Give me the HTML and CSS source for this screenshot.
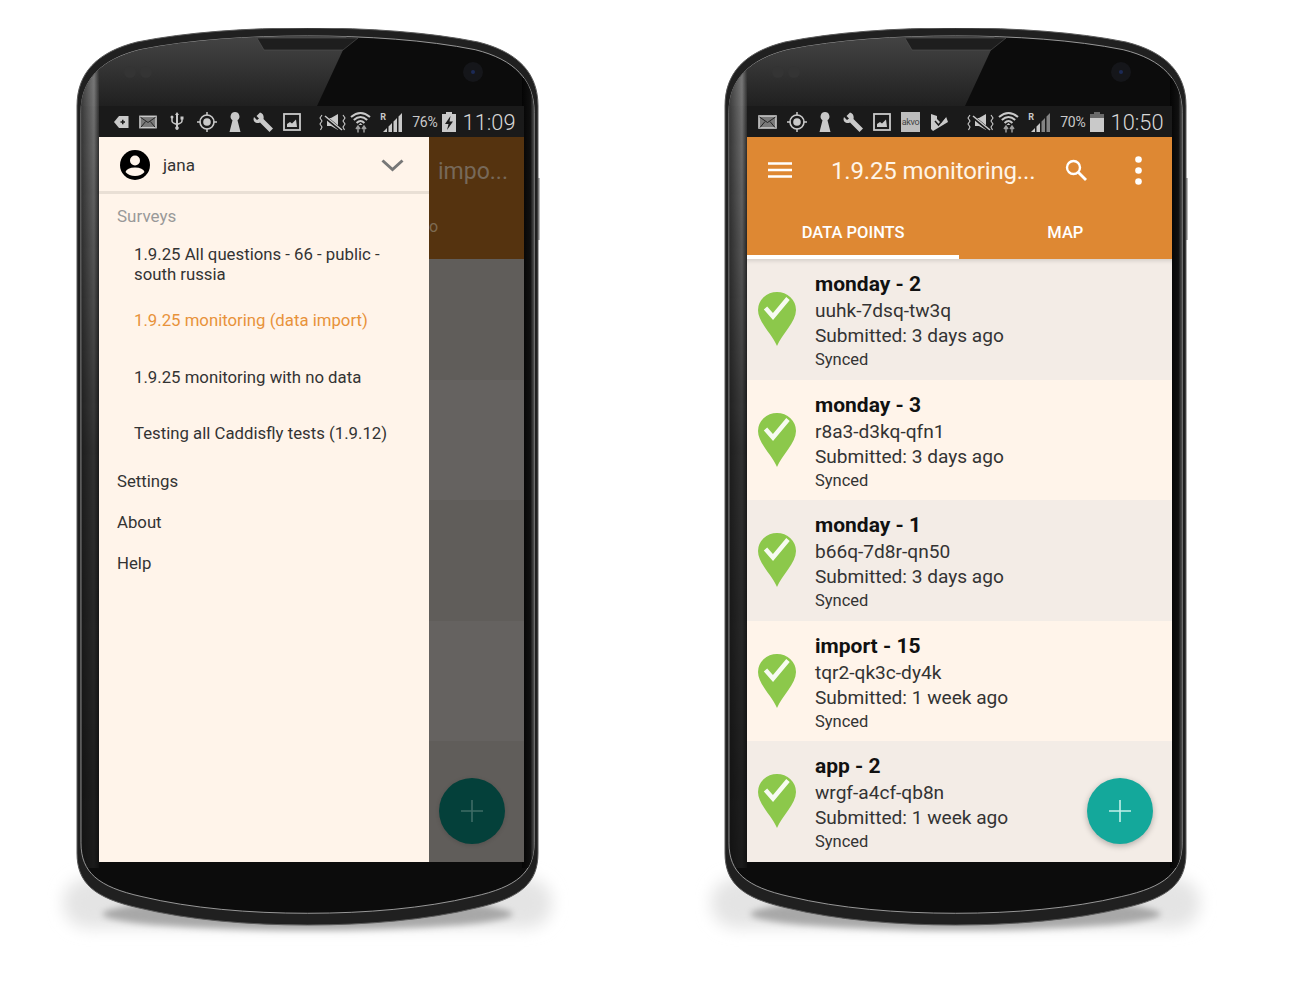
FILE: index.html
```html
<!DOCTYPE html>
<html lang="en">
<head>
    <meta charset="UTF-8">
    <meta name="viewport" content="width=device-width, initial-scale=1.0">
    <title>Monitoring app screens</title>
    <link rel="stylesheet" href="styles.css">
</head>
<body>
    <svg class="defs" aria-hidden="true">
        <defs>
            <linearGradient id="glare" x1="0" y1="0" x2="0" y2="1">
                <stop offset="0" stop-color="#484848"/>
                <stop offset="1" stop-color="#202020"/>
            </linearGradient>
            <linearGradient id="rim" x1="0" y1="0" x2="1" y2="0">
                <stop offset="0" stop-color="#3c3c3c"/>
                <stop offset="0.72" stop-color="#7c7c7c"/>
                <stop offset="1" stop-color="#333"/>
            </linearGradient>
            <linearGradient id="rimFade" x1="0" y1="0" x2="0" y2="1">
                <stop offset="0" stop-color="#fff"/>
                <stop offset="0.5" stop-color="#555"/>
                <stop offset="1" stop-color="#222"/>
            </linearGradient>
            <linearGradient id="rimRight" x1="0" y1="0" x2="1" y2="0">
                <stop offset="0" stop-color="#040404"/>
                <stop offset="0.7" stop-color="#101010"/>
                <stop offset="1" stop-color="#505050"/>
            </linearGradient>
            <mask id="rimMask" maskUnits="userSpaceOnUse" x="0" y="15" width="30" height="825">
                <rect x="0" y="15" width="30" height="825" fill="url(#rimFade)"/>
            </mask>
            <filter id="soft" x="-10%" y="-100%" width="120%" height="300%">
                <feGaussianBlur stdDeviation="8"/>
            </filter>
            <filter id="softNear" x="-10%" y="-100%" width="120%" height="300%">
                <feGaussianBlur stdDeviation="3"/>
            </filter>
            <clipPath id="faceClip">
                <path transform="translate(4 8) scale(.983 .978)" d="M0 78C0 45 20 24 60 14C110 4 170 0 230.500 0C291 0 351 4 401 14C441 24 461 45 461 78L461 825C461 855 444 870 399 880C349 892 290 897 230.500 897C171 897 112 892 62 880C17 870 0 855 0 825Z"/>
            </clipPath>
        </defs>

        <symbol id="phone-body" viewBox="-30 0 522 925">
            <rect x="-14" y="850" width="489" height="50" rx="25" fill="#e4e4e4" filter="url(#soft)"/>
            <ellipse cx="230.500" cy="886" rx="205" ry="16" fill="#a8a8a8" filter="url(#softNear)"/>
            <path d="M0 78C0 45 20 24 60 14C110 4 170 0 230.500 0C291 0 351 4 401 14C441 24 461 45 461 78L461 825C461 855 444 870 399 880C349 892 290 897 230.500 897C171 897 112 892 62 880C17 870 0 855 0 825Z" fill="#202020" stroke="#5a5a5a"/>
            <path transform="translate(4 8) scale(.983 .978)" d="M0 78C0 45 20 24 60 14C110 4 170 0 230.500 0C291 0 351 4 401 14C441 24 461 45 461 78L461 825C461 855 444 870 399 880C349 892 290 897 230.500 897C171 897 112 892 62 880C17 870 0 855 0 825Z" fill="#0c0c0c" stroke="#9a9a9a"/>
            <g clip-path="url(#faceClip)">
                <path d="M0 0H272L266 22L240 78H0Z" fill="url(#glare)"/>
                <rect x="4" y="15" width="18" height="825" fill="url(#rim)" mask="url(#rimMask)"/>
                <rect x="445" y="50" width="12" height="790" fill="url(#rimRight)"/>
            </g>
            <path d="M180 10H281L266 22H187Z" fill="#1e1e1e" stroke="#555" stroke-width=".6"/>
            <circle cx="53" cy="44" r="6" fill="#343434"/>
            <circle cx="69" cy="44" r="6" fill="#343434"/>
            <circle cx="396" cy="44" r="10" fill="#15161a"/>
            <circle cx="396" cy="44" r="2" fill="#1c2a55"/>
            <rect x="461" y="150" width="1.500" height="62" fill="#777"/>
        </symbol>

        <symbol id="ic-tag" viewBox="0 0 15 14"><path d="M5 1H14.500V13H5L0 7Z" fill="currentColor"/><path d="M6.500 7H11M8.750 4.800V9.200" stroke="#1a1a1a" stroke-width="1.500"/></symbol>
        <symbol id="ic-mail" viewBox="0 0 19 14"><rect x="1" y="1" width="17" height="12" fill="currentColor" opacity=".55"/><rect x="1" y="1" width="17" height="12" fill="none" stroke="currentColor" stroke-width="1.600"/><path d="M1.500 2L9.500 7.500L17.500 2M2 12.500L7 6.500M17 12.500L12 6.500" stroke="#222" fill="none" stroke-width="1"/></symbol>
        <symbol id="ic-usb" viewBox="0 0 20 20"><path d="M10 0L12 3H11V14.500A1.800 1.800 0 1 1 9 14.500V3H8Z" fill="currentColor"/><path d="M5 6V9Q5 11 10 12.500Q15 11 15 9V7" fill="none" stroke="currentColor" stroke-width="1.500"/><circle cx="5" cy="5" r="1.500" fill="currentColor"/><rect x="13.500" y="4.500" width="3" height="3" fill="currentColor"/></symbol>
        <symbol id="ic-target" viewBox="0 0 20 20"><circle cx="10" cy="10" r="7" fill="none" stroke="currentColor" stroke-width="1.600"/><circle cx="10" cy="10" r="3.800" fill="currentColor"/><path d="M10 0V3.500M10 16.500V20M0 10H3.500M16.500 10H20" stroke="currentColor" stroke-width="1.500"/></symbol>
        <symbol id="ic-key" viewBox="0 0 16 20"><path d="M8 0A4.500 4.500 0 0 1 10.500 8.200L13.500 20H2.500L5.500 8.200A4.500 4.500 0 0 1 8 0Z" fill="currentColor"/></symbol>
        <symbol id="ic-wrench" viewBox="0 0 20 20"><path d="M7 0.500L3.500 4L6 6.500L4 8L1 5Q-.5 9 2.500 10.500Q5 11.500 7 10.500L16.500 20L20 16.500L10.500 7Q11.500 2 7 .5Z" fill="currentColor"/></symbol>
        <symbol id="ic-pic" viewBox="0 0 18 18"><rect x="1" y="1" width="16" height="16" fill="none" stroke="currentColor" stroke-width="1.800"/><path d="M4 14V11L7 9L9 10.500L13 6.500L14 14Z" fill="currentColor"/></symbol>
        <symbol id="ic-check" viewBox="0 0 18 18"><path d="M1 1L7 3V6L11 10L16 3.500L18 9L3 18L1 16Z" fill="currentColor"/><path d="M5 8L8.500 12L16 3" fill="none" stroke="#1a1a1a" stroke-width="1.500"/></symbol>
        <symbol id="ic-mute" viewBox="0 0 27 18"><path d="M8 5H12L19 1V17L12 13H8Z" fill="currentColor"/><path d="M5 3L22 17" stroke="#1a1a1a" stroke-width="3.500"/><path d="M6 3L23 17" stroke="currentColor" stroke-width="1.500"/><path d="M3 2L1 5L3 8L1 11L3 14L1.500 17M24 2L26 5L24 8L26 11L24 14L25.500 17" fill="none" stroke="currentColor" stroke-width="1.100"/></symbol>
        <symbol id="ic-wifi" viewBox="0 0 21 22"><path d="M1 6Q10.500 -2 20 6M3.800 9Q10.500 3 17.200 9M6.600 12Q10.500 8 14.400 12" fill="none" stroke="currentColor" stroke-width="2"/><path d="M8.500 14L10.500 12L12.500 14Z" fill="currentColor"/><path d="M8 15V21.500M14 15V21.500M6 18L8 15L10 18M12 18L14 15L16 18" fill="none" stroke="currentColor" stroke-width="1.500" opacity=".75"/></symbol>
        <symbol id="ic-signal" viewBox="0 0 23 22"><path d="M3 21L7 17V21ZM8.500 21V15.500L12 12V21ZM13.500 21V10.500L17 7V21ZM18.500 21V5.500L22 2V21Z" fill="currentColor"/></symbol>
        <symbol id="ic-signal-low" viewBox="0 0 23 22"><path d="M3 21L7 17V21ZM8.500 21V15.500L12 12V21Z" fill="currentColor"/><path d="M13.500 21V10.500L17 7V21ZM18.500 21V5.500L22 2V21Z" fill="currentColor" opacity=".6"/></symbol>
        <symbol id="ic-bat-charge" viewBox="0 0 14 20"><path d="M4 0H10V2H14V20H0V2H4Z" fill="currentColor"/><path d="M8.500 4L3 12H6.500L5 18L11 9.500H7.500Z" fill="#1a1a1a"/></symbol>
        <symbol id="ic-bat" viewBox="0 0 14 20"><path d="M4 0H10V2H14V20H0V2H4Z" fill="currentColor" opacity=".45"/><rect y="6" width="14" height="14" fill="currentColor"/></symbol>

        <symbol id="ic-pin" viewBox="0 0 38 54"><path d="M19 54C14 42 0 30 0 18A19 18 0 0 1 38 18C38 30 24 42 19 54Z" fill="#8cc84b"/><path d="M7.500 16L15 24.500L30 6.500" fill="none" stroke="#fff" stroke-width="4.500" opacity=".93"/></symbol>
        <symbol id="ic-plus" viewBox="0 0 22 22"><path d="M0 11H22M11 0V22" stroke="currentColor" stroke-width="1.600"/></symbol>
    </svg>

    <div class="phones">
        <section class="phone">
            <svg class="phone-body" aria-hidden="true"><use href="#phone-body"/></svg>
            <div class="screen">
                <div class="status">
                    <div class="status-left status-left-drawer">
                        <svg class="ic w15"><use href="#ic-tag"/></svg>
                        <svg class="ic w18"><use href="#ic-mail"/></svg>
                        <svg class="ic w20"><use href="#ic-usb"/></svg>
                        <svg class="ic w20"><use href="#ic-target"/></svg>
                        <svg class="ic w16"><use href="#ic-key"/></svg>
                        <svg class="ic w20"><use href="#ic-wrench"/></svg>
                        <svg class="ic w18"><use href="#ic-pic"/></svg>
                    </div>
                    <div class="status-right">
                        <svg class="ic w27"><use href="#ic-mute"/></svg>
                        <svg class="ic w21 wifi"><use href="#ic-wifi"/></svg>
                        <span class="roam">R</span>
                        <svg class="ic w23 signal"><use href="#ic-signal"/></svg>
                        <span class="percent">76%</span>
                        <svg class="ic w14 bat"><use href="#ic-bat-charge"/></svg>
                        <span class="clock">11:09</span>
                    </div>
                </div>
                <div class="app">
                    <nav class="drawer">
                        <div class="account">
                            <svg class="avatar" viewBox="0 0 30 30"><circle cx="15" cy="15" r="15" fill="#000"/><circle cx="15" cy="10.500" r="5" fill="#fff4ea"/><path d="M5.500 22Q7 17.500 15 17.500Q23 17.500 24.500 22Q21 26 15 26Q9 26 5.500 22Z" fill="#fff4ea"/></svg>
                            <span class="account-name">jana</span>
                            <svg class="chevron" viewBox="0 0 23 13"><path d="M1.500 1.500L11.500 10.500L21.500 1.500" fill="none" stroke="#777" stroke-width="3"/></svg>
                        </div>
                        <h2 class="drawer-title">Surveys</h2>
                        <ul class="survey-list">
                            <li class="survey survey-long">1.9.25 All questions - 66 - public - south russia</li>
                            <li class="survey survey-active">1.9.25 monitoring (data import)</li>
                            <li class="survey">1.9.25 monitoring with no data</li>
                            <li class="survey">Testing all Caddisfly tests (1.9.12)</li>
                        </ul>
                        <ul class="drawer-links">
                            <li>Settings</li>
                            <li>About</li>
                            <li>Help</li>
                        </ul>
                    </nav>
                    <div class="backdrop">
                        <div class="backdrop-bar">
                            <span class="backdrop-title">impo...</span>
                            <span class="backdrop-tab">o</span>
                        </div>
                        <div class="backdrop-row"></div>
                        <div class="backdrop-row backdrop-row-alt"></div>
                        <div class="backdrop-row"></div>
                        <div class="backdrop-row backdrop-row-alt"></div>
                        <div class="backdrop-row"></div>
                        <div class="fab fab-dim"><svg class="plus"><use href="#ic-plus"/></svg></div>
                    </div>
                </div>
            </div>
        </section>

        <section class="phone">
            <svg class="phone-body" aria-hidden="true"><use href="#phone-body"/></svg>
            <div class="screen">
                <div class="status">
                    <div class="status-left">
                        <svg class="ic w19"><use href="#ic-mail"/></svg>
                        <svg class="ic w20"><use href="#ic-target"/></svg>
                        <svg class="ic w16"><use href="#ic-key"/></svg>
                        <svg class="ic w20"><use href="#ic-wrench"/></svg>
                        <svg class="ic w18"><use href="#ic-pic"/></svg>
                        <span class="akvo">akvo</span>
                        <svg class="ic w18"><use href="#ic-check"/></svg>
                    </div>
                    <div class="status-right">
                        <svg class="ic w27"><use href="#ic-mute"/></svg>
                        <svg class="ic w21 wifi"><use href="#ic-wifi"/></svg>
                        <span class="roam">R</span>
                        <svg class="ic w23 signal"><use href="#ic-signal-low"/></svg>
                        <span class="percent">70%</span>
                        <svg class="ic w14 bat"><use href="#ic-bat"/></svg>
                        <span class="clock">10:50</span>
                    </div>
                </div>
                <div class="app app-list">
                    <header class="toolbar">
                        <div class="toolbar-top">
                            <svg class="menu" viewBox="0 0 24 16"><path d="M0 1.500H24M0 8H24M0 14.500H24" stroke="#fff" stroke-width="2.400"/></svg>
                            <h1 class="toolbar-title">1.9.25 monitoring...</h1>
                            <svg class="search" viewBox="0 0 22 22"><circle cx="8.500" cy="8.500" r="6.500" fill="none" stroke="#fff" stroke-width="2.400"/><path d="M13.500 13.500L21 21" stroke="#fff" stroke-width="2.800"/></svg>
                            <svg class="more" viewBox="0 0 7 29"><circle cx="3.500" cy="3.500" r="3.300" fill="#fff"/><circle cx="3.500" cy="14.500" r="3.300" fill="#fff"/><circle cx="3.500" cy="25.500" r="3.300" fill="#fff"/></svg>
                        </div>
                        <div class="tabs">
                            <div class="tab tab-active">DATA POINTS</div>
                            <div class="tab">MAP</div>
                        </div>
                    </header>
                    <div class="rows">
                        <article class="row">
                            <svg class="pin"><use href="#ic-pin"/></svg>
                            <div class="row-text">
                                <div class="row-title">monday - 2</div>
                                <div class="row-line">uuhk-7dsq-tw3q</div>
                                <div class="row-line">Submitted: 3 days ago</div>
                                <div class="row-sync">Synced</div>
                            </div>
                        </article>
                        <article class="row">
                            <svg class="pin"><use href="#ic-pin"/></svg>
                            <div class="row-text">
                                <div class="row-title">monday - 3</div>
                                <div class="row-line">r8a3-d3kq-qfn1</div>
                                <div class="row-line">Submitted: 3 days ago</div>
                                <div class="row-sync">Synced</div>
                            </div>
                        </article>
                        <article class="row">
                            <svg class="pin"><use href="#ic-pin"/></svg>
                            <div class="row-text">
                                <div class="row-title">monday - 1</div>
                                <div class="row-line">b66q-7d8r-qn50</div>
                                <div class="row-line">Submitted: 3 days ago</div>
                                <div class="row-sync">Synced</div>
                            </div>
                        </article>
                        <article class="row">
                            <svg class="pin"><use href="#ic-pin"/></svg>
                            <div class="row-text">
                                <div class="row-title">import - 15</div>
                                <div class="row-line">tqr2-qk3c-dy4k</div>
                                <div class="row-line">Submitted: 1 week ago</div>
                                <div class="row-sync">Synced</div>
                            </div>
                        </article>
                        <article class="row">
                            <svg class="pin"><use href="#ic-pin"/></svg>
                            <div class="row-text">
                                <div class="row-title">app - 2</div>
                                <div class="row-line">wrgf-a4cf-qb8n</div>
                                <div class="row-line">Submitted: 1 week ago</div>
                                <div class="row-sync">Synced</div>
                            </div>
                        </article>
                    </div>
                    <div class="fab"><svg class="plus"><use href="#ic-plus"/></svg></div>
                </div>
            </div>
        </section>
    </div>
</body>
</html>
```

FILE: styles.css
```css
* {
    box-sizing: border-box;
}

html,
body {
    margin: 0;
    height: 990px;
    overflow: hidden;
    background-color: #fff;
    font-family: Roboto, "Liberation Sans", sans-serif;
}

.defs {
    position: absolute;
    width: 0;
    height: 0;
}

.phones {
    display: flex;
    gap: 187px;
    padding: 28px 0 0 77px;
}

.phone {
    position: relative;
    width: 461px;
    height: 897px;
    padding: 78px 0 0 22px;
    flex-shrink: 0;
}

.phone-body {
    position: absolute;
    left: -30px;
    top: 0;
    width: 522px;
    height: 925px;
}

.screen {
    position: relative;
    display: flex;
    flex-direction: column;
    width: 424.5px;
    height: 756px;
    overflow: hidden;
}

/* status bar */
.status {
    display: flex;
    align-items: center;
    justify-content: space-between;
    height: 31px;
    padding: 0 8px 0 11px;
    background-color: #1a1a1a;
    color: #c9c9c9;
    flex-shrink: 0;
}

.status-left,
.status-right {
    display: flex;
    align-items: center;
}

.status-left {
    gap: 10px;
}

.status-left-drawer {
    padding-left: 4px;
}

.ic {
    height: 20px;
}

.w14 { width: 14px; }
.w15 { width: 15px; }
.w16 { width: 16px; }
.w18 { width: 18px; }
.w19 { width: 19px; }
.w20 { width: 20px; }
.w21 { width: 21px; height: 22px; }
.w23 { width: 23px; height: 22px; }
.w27 { width: 27px; }

.wifi {
    margin-left: 4px;
}

.roam {
    width: 6px;
    margin: -10px 0 0 9px;
    font-size: 9px;
    font-weight: 700;
    line-height: 10px;
}

.signal {
    margin-left: -6px;
}

.percent {
    margin-left: 9px;
    font-size: 14px;
    letter-spacing: -0.2px;
}

.bat {
    margin-left: 4px;
}

.clock {
    margin: 1px 0 0 7px;
    font-size: 21.8px;
    font-weight: 300;
    color: #d8d8d8;
}

.akvo {
    width: 19px;
    height: 20px;
    background-color: #bdbdbd;
    color: #444;
    font-size: 9px;
    letter-spacing: -0.4px;
    line-height: 20px;
    text-align: center;
}

.app {
    position: relative;
    display: flex;
    flex: 1;
    min-height: 0;
}

.app-list {
    flex-direction: column;
}

/* drawer */
.drawer {
    width: 330px;
    background-color: #fff4ea;
    color: #333;
    font-size: 16.75px;
    flex-shrink: 0;
}

.account {
    display: flex;
    align-items: center;
    height: 57px;
    padding: 2px 25px 0 21px;
    border-bottom: 3px solid #e9dfd5;
}

.avatar {
    width: 30px;
    height: 30px;
}

.account-name {
    margin-left: 13px;
    font-size: 17px;
}

.chevron {
    width: 23px;
    height: 13px;
    margin-left: auto;
}

.drawer-title {
    margin: 12px 0 0 18px;
    font-size: 17px;
    font-weight: 400;
    line-height: 20px;
    color: #999;
}

.survey-list,
.drawer-links {
    margin: 0;
    padding: 0;
    list-style: none;
}

.survey-list {
    margin-top: 9px;
}

.survey {
    display: flex;
    align-items: center;
    height: 56.5px;
    padding: 0 40px 0 35px;
    line-height: 20px;
}

.survey-long {
    height: 57px;
}

.survey-active {
    color: #e8923a;
}

.drawer-links {
    margin-top: -1px;
    padding-left: 18px;
}

.drawer-links li {
    height: 41px;
    line-height: 41px;
}

/* dimmed content behind the drawer */
.backdrop {
    position: relative;
    display: flex;
    flex-direction: column;
    flex: 1;
    min-width: 0;
    overflow: hidden;
    background-color: #615e5c;
}

.backdrop-bar {
    display: flex;
    flex-direction: column;
    height: 122px;
    padding: 20px 0 0 9px;
    background-color: #55330f;
    flex-shrink: 0;
}

.backdrop-title {
    font-size: 23px;
    line-height: 30px;
    color: #77695a;
}

.backdrop-tab {
    margin: 30px 0 0 -9px;
    font-size: 16px;
    line-height: 20px;
    color: #7d6a52;
}

.backdrop-row {
    flex: 1;
    background-color: #605d5a;
}

.backdrop-row-alt {
    background-color: #656260;
}

/* toolbar */
.toolbar {
    height: 122px;
    background-color: #de8833;
    color: #fff;
    flex-shrink: 0;
}

.toolbar-top {
    display: flex;
    align-items: center;
    height: 66px;
    padding-left: 21px;
}

.menu {
    width: 24px;
    height: 16px;
    flex-shrink: 0;
}

.toolbar-title {
    width: 234px;
    margin: 1px 0 0 39px;
    font-size: 24px;
    font-weight: 400;
    letter-spacing: -0.15px;
    color: #fff5e8;
    white-space: nowrap;
}

.search {
    width: 22px;
    height: 22px;
}

.more {
    width: 7px;
    height: 29px;
    margin-left: 48px;
}

.tabs {
    display: flex;
    height: 56px;
}

.tab {
    flex: 1;
    padding-top: 20px;
    font-size: 16.5px;
    font-weight: 500;
    line-height: 20px;
    text-align: center;
}

.tab-active {
    border-bottom: 4px solid #fff;
}

/* list */
.rows {
    display: flex;
    flex-direction: column;
    flex: 1;
    min-height: 0;
}

.row {
    display: flex;
    flex: 1;
    background-color: #fff4ea;
    color: #333;
}

.row:nth-child(odd) {
    background-color: #f3ece6;
}

.row:first-child {
    box-shadow: inset 0 5px 4px -3px rgba(0, 0, 0, 0.12);
}

.pin {
    width: 38px;
    height: 54px;
    margin: 33px 0 0 11px;
    flex-shrink: 0;
}

.row-text {
    margin-left: 19px;
    padding-top: 11px;
    font-size: 19.1px;
}

.row-title {
    font-size: 21px;
    font-weight: 700;
    line-height: 28px;
    color: #111;
}

.row-line {
    line-height: 25px;
}

.row-sync {
    font-size: 16.5px;
    line-height: 24px;
}

/* floating button */
.fab {
    position: absolute;
    right: 19px;
    bottom: 18px;
    display: flex;
    align-items: center;
    justify-content: center;
    width: 66px;
    height: 66px;
    border-radius: 50%;
    background-color: #14a89b;
    color: #c4f0ea;
    box-shadow: 0 2px 6px rgba(0, 0, 0, 0.28);
}

.fab-dim {
    background-color: #04403a;
    color: #3f6c66;
    box-shadow: 0 1px 4px rgba(0, 0, 0, 0.15);
}

.plus {
    width: 22px;
    height: 22px;
}
```
